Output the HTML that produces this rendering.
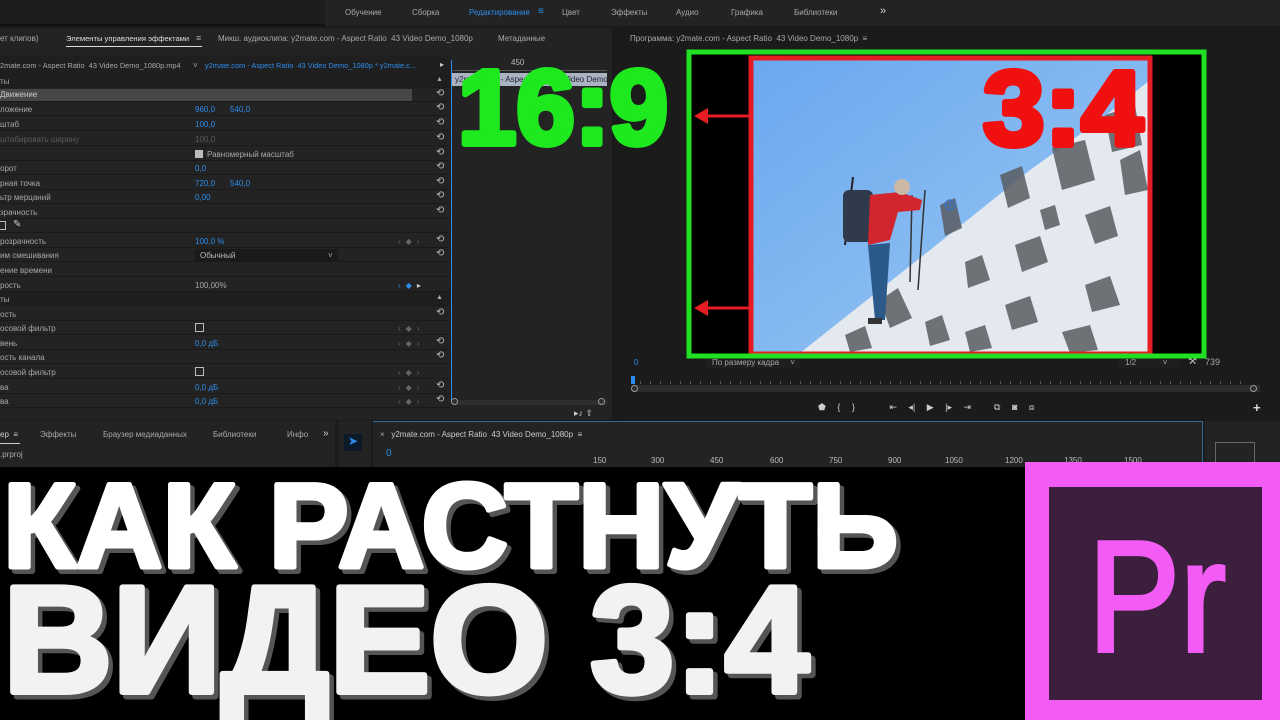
<!DOCTYPE html>
<html><head><meta charset="utf-8">
<style>
*{margin:0;padding:0;box-sizing:border-box}
body{width:1280px;height:720px;overflow:hidden;background:#1b1b1b;font-family:"Liberation Sans","DejaVu Sans",sans-serif;position:relative;color:#a8a8a8;font-size:8px}
.a{position:absolute;white-space:nowrap}
.b{color:#2d8ceb}
.dim{color:#5a5a5a}
.row{position:absolute;left:0;width:450px;height:14px;border-bottom:1px solid #1a1a1a}
.rs{position:absolute;left:436px;font-size:10px;color:#bbb}
.kf{position:absolute;left:398px;color:#666;font-size:8px;letter-spacing:5px}
svg text{font-family:"Liberation Sans",sans-serif;font-weight:700}
</style></head><body>
<div class="a" style="left:0;top:0;width:1280px;height:26px;background:#1d1d1d;border-bottom:2px solid #111"></div>
<div class="a" style="left:325px;top:0;width:955px;height:26px;background:#232323"></div>
<div class="a" style="top:8px;left:345px">Обучение</div>
<div class="a" style="top:8px;left:412px">Сборка</div>
<div class="a b" style="top:8px;left:469px">Редактирование</div>
<div class="a b" style="top:6px;left:538px;font-size:10px">≡</div>
<div class="a" style="top:8px;left:562px">Цвет</div>
<div class="a" style="top:8px;left:611px">Эффекты</div>
<div class="a" style="top:8px;left:676px">Аудио</div>
<div class="a" style="top:8px;left:731px">Графика</div>
<div class="a" style="top:8px;left:794px">Библиотеки</div>
<div class="a" style="top:5px;left:880px;font-size:11px;color:#ccc">»</div>

<div class="a" style="left:0;top:28px;width:612px;height:392px;background:#232323"></div>
<div class="a" style="left:612px;top:28px;width:10px;height:392px;background:#1a1a1a"></div>
<div class="a" style="top:34px;left:0">ет клипов)</div>
<div class="a" style="top:34px;left:66px;color:#ddd;font-size:7.6px">Элементы управления эффектами</div>
<div class="a" style="left:66px;top:46px;width:136px;height:1px;background:#ddd"></div>
<div class="a" style="top:33px;left:196px;font-size:9px">≡</div>
<div class="a" style="top:34px;left:218px">Микш. аудиоклипа: y2mate.com - Aspect Ratio&nbsp; 43 Video Demo_1080p</div>
<div class="a" style="top:34px;left:498px">Метаданные</div>
<div class="a" style="left:0;top:56px;width:450px;height:18px;background:#1f1f1f"></div>
<div class="a" style="top:61px;left:0;font-size:7.4px">2mate.com - Aspect Ratio&nbsp; 43 Video Demo_1080p.mp4</div>
<div class="a" style="top:61px;left:193px">˅</div>
<div class="a b" style="top:61px;left:205px;font-size:7.4px">y2mate.com - Aspect Ratio&nbsp; 43 Video Demo_1080p * y2mate.c...</div>
<div class="a" style="top:60px;left:440px;font-size:8px;color:#ccc">▸</div>

<div class="row" style="top:74px;background:#1e1e1e"><span class="a" style="left:0;top:3px">ты</span><span class="a" style="left:436px;top:2px;font-size:7px">▲</span></div>
<div class="row" style="top:88px"><div class="a" style="left:0;top:1px;width:412px;height:12px;background:#474747"></div><span class="a" style="left:0;top:2px;color:#ccc">Движение</span><span class="rs" style="top:0">⟲</span></div>
<div class="row" style="top:102px"><span class="a" style="top:3px">ложение</span><span class="a b" style="left:195px;top:3px">960,0</span><span class="a b" style="left:230px;top:3px">540,0</span><span class="rs">⟲</span></div>
<div class="row" style="top:117px"><span class="a" style="top:3px">штаб</span><span class="a b" style="left:195px;top:3px">100,0</span><span class="rs">⟲</span></div>
<div class="row" style="top:132px"><span class="a dim" style="top:3px">штабировать ширину</span><span class="a dim" style="left:195px;top:3px">100,0</span><span class="rs">⟲</span></div>
<div class="row" style="top:147px"><span class="a" style="left:195px;top:3px;width:8px;height:8px;background:#bbb"></span><span class="a" style="left:207px;top:3px">Равномерный масштаб</span><span class="rs">⟲</span></div>
<div class="row" style="top:161px"><span class="a" style="top:3px">орот</span><span class="a b" style="left:195px;top:3px">0,0</span><span class="rs">⟲</span></div>
<div class="row" style="top:176px"><span class="a" style="top:3px">рная точка</span><span class="a b" style="left:195px;top:3px">720,0</span><span class="a b" style="left:230px;top:3px">540,0</span><span class="rs">⟲</span></div>
<div class="row" style="top:190px"><span class="a" style="top:3px">ьтр мерцаний</span><span class="a b" style="left:195px;top:3px">0,00</span><span class="rs">⟲</span></div>
<div class="row" style="top:205px"><span class="a" style="top:3px">зрачность</span><span class="rs">⟲</span></div>
<div class="row" style="top:219px"><span class="a" style="left:-3px;top:2px;width:9px;height:9px;border:1px solid #bbb"></span><span class="a" style="left:13px;top:0;font-size:10px;color:#ccc">✎</span></div>
<div class="row" style="top:234px"><span class="a" style="top:3px">розрачность</span><span class="a b" style="left:195px;top:3px">100,0 %</span><span class="kf" style="top:3px">‹◆›</span><span class="rs">⟲</span></div>
<div class="row" style="top:248px"><span class="a" style="top:3px">им смешивания</span><div class="a" style="left:195px;top:1px;width:143px;height:12px;background:#1a1a1a"></div><span class="a" style="left:200px;top:3px;color:#bbb">Обычный</span><span class="a" style="left:328px;top:3px">˅</span><span class="rs">⟲</span></div>
<div class="row" style="top:263px"><span class="a" style="top:3px">ение времени</span></div>
<div class="row" style="top:278px"><span class="a" style="top:3px">рость</span><span class="a" style="left:195px;top:3px">100,00%</span><span class="kf" style="top:3px;color:#2d8ceb">‹◆<b style="color:#ccc">▸</b></span></div>
<div class="row" style="top:292px;background:#1e1e1e"><span class="a" style="top:3px">ты</span><span class="a" style="left:436px;top:2px;font-size:7px">▲</span></div>
<div class="row" style="top:307px"><span class="a" style="top:3px">ость</span><span class="rs">⟲</span></div>
<div class="row" style="top:321px"><span class="a" style="top:3px">осовой фильтр</span><span class="a" style="left:195px;top:2px;width:9px;height:9px;border:1px solid #bbb"></span><span class="kf" style="top:3px">‹◆›</span></div>
<div class="row" style="top:336px"><span class="a" style="top:3px">вень</span><span class="a b" style="left:195px;top:3px">0,0 дБ</span><span class="kf" style="top:3px">‹◆›</span><span class="rs">⟲</span></div>
<div class="row" style="top:350px"><span class="a" style="top:3px">ость канала</span><span class="rs">⟲</span></div>
<div class="row" style="top:365px"><span class="a" style="top:3px">осовой фильтр</span><span class="a" style="left:195px;top:2px;width:9px;height:9px;border:1px solid #bbb"></span><span class="kf" style="top:3px">‹◆›</span></div>
<div class="row" style="top:380px"><span class="a" style="top:3px">ва</span><span class="a b" style="left:195px;top:3px">0,0 дБ</span><span class="kf" style="top:3px">‹◆›</span><span class="rs">⟲</span></div>
<div class="row" style="top:394px"><span class="a" style="top:3px">ва</span><span class="a b" style="left:195px;top:3px">0,0 дБ</span><span class="kf" style="top:3px">‹◆›</span><span class="rs">⟲</span></div>

<div class="a" style="left:451px;top:60px;width:1px;height:342px;background:#2d8ceb"></div>
<div class="a" style="left:511px;top:58px;color:#bbb">450</div>
<div class="a" style="left:452px;top:70px;width:155px;height:1px;background:#555"></div>
<div class="a" style="left:452px;top:73px;width:155px;height:13px;background:#a9b3c2;color:#223;padding:2px 3px;overflow:hidden">y2mate.com - Aspect Ratio 43 Video Demo</div>
<div class="a" style="left:452px;top:400px;width:155px;height:5px;background:#2e2e2e;border-radius:3px"></div>
<div class="a" style="left:451px;top:398px;width:7px;height:7px;border:1px solid #999;border-radius:50%"></div>
<div class="a" style="left:598px;top:398px;width:7px;height:7px;border:1px solid #999;border-radius:50%"></div>
<div class="a" style="left:574px;top:408px;color:#ccc;font-size:9px">▸♪ ⇪</div>

<div class="a" style="top:34px;left:630px">Программа: y2mate.com - Aspect Ratio&nbsp; 43 Video Demo_1080p&nbsp; ≡</div>
<div class="a b" style="top:358px;left:634px">0</div>
<div class="a" style="top:356px;left:705px;width:95px;height:12px;background:#1f1f1f"></div>
<div class="a" style="top:358px;left:712px">По размеру кадра&nbsp;&nbsp;&nbsp;&nbsp; ˅</div>
<div class="a" style="top:356px;left:1118px;width:62px;height:12px;background:#1f1f1f"></div>
<div class="a" style="top:358px;left:1125px">1/2&nbsp;&nbsp;&nbsp;&nbsp;&nbsp;&nbsp;&nbsp;&nbsp;&nbsp;&nbsp;&nbsp; ˅</div>
<div class="a" style="top:356px;left:1188px;font-size:10px;color:#ccc">⚒</div>
<div class="a" style="top:357px;left:1205px;font-size:9px">739</div>
<div class="a" style="top:385px;left:632px;width:628px;height:7px;background:#2c2c2c"></div>
<div class="a" style="top:385px;left:631px;width:7px;height:7px;border:1px solid #999;border-radius:50%"></div>
<div class="a" style="top:385px;left:1250px;width:7px;height:7px;border:1px solid #999;border-radius:50%"></div>
<div class="a" style="top:376px;left:631px;width:4px;height:8px;background:#2d8ceb"></div>
<div class="a" style="top:381px;left:640px;width:610px;height:3px;background:repeating-linear-gradient(90deg,#555 0 1px,transparent 1px 10px)"></div>
<div class="a" style="top:402px;left:818px;color:#ccc;font-size:9px;word-spacing:9px">⬟ { }&nbsp;&nbsp; ⇤ ◂| ▶ |▸ ⇥&nbsp; ⧉ ◙ ⧈</div>
<div class="a" style="top:400px;left:1253px;color:#ddd;font-size:13px;font-weight:bold">+</div>

<div class="a" style="left:0;top:421px;width:335px;height:46px;background:#232323"></div>
<div class="a" style="top:430px;left:0;color:#ccc">ер&nbsp; ≡</div>
<div class="a" style="top:443px;left:0;width:20px;height:1px;background:#ccc"></div>
<div class="a" style="top:430px;left:40px">Эффекты</div>
<div class="a" style="top:430px;left:103px">Браузер медиаданных</div>
<div class="a" style="top:430px;left:213px">Библиотеки</div>
<div class="a" style="top:430px;left:287px">Инфо</div>
<div class="a" style="top:428px;left:323px;color:#ccc;font-size:10px">»</div>
<div class="a" style="top:450px;left:0">.prproj</div>
<div class="a" style="left:338px;top:421px;width:33px;height:46px;background:#232323"></div>
<div class="a" style="left:344px;top:434px;width:18px;height:17px;background:#0d1a2a;color:#2d8ceb;font-size:12px;text-align:center">➤</div>
<div class="a" style="left:373px;top:421px;width:830px;height:46px;background:#232323;border-top:1px solid #2d6a9a;border-right:1px solid #2d6a9a"></div>
<div class="a" style="top:430px;left:380px">×&nbsp;&nbsp; <span style="color:#ccc">y2mate.com - Aspect Ratio&nbsp; 43 Video Demo_1080p&nbsp; ≡</span></div>
<div class="a b" style="top:448px;left:386px;font-size:10px">0</div>
<div class="a" style="top:456px;left:593px;color:#bbb">150</div><div class="a" style="top:456px;left:651px;color:#bbb">300</div><div class="a" style="top:456px;left:710px;color:#bbb">450</div><div class="a" style="top:456px;left:770px;color:#bbb">600</div><div class="a" style="top:456px;left:829px;color:#bbb">750</div><div class="a" style="top:456px;left:888px;color:#bbb">900</div><div class="a" style="top:456px;left:945px;color:#bbb">1050</div><div class="a" style="top:456px;left:1005px;color:#bbb">1200</div><div class="a" style="top:456px;left:1064px;color:#bbb">1350</div><div class="a" style="top:456px;left:1124px;color:#bbb">1500</div>
<div class="a" style="left:1205px;top:421px;width:75px;height:46px;background:#232323"></div>
<div class="a" style="left:1215px;top:442px;width:40px;height:26px;border:1px solid #666"></div>

<svg class="a" style="left:0;top:0" width="1280" height="720" viewBox="0 0 1280 720">
 <rect x="690" y="52" width="516" height="304" fill="#000"/>
 <defs><linearGradient id="sky" x1="0" y1="0" x2="1" y2="1"><stop offset="0" stop-color="#6aa8ef"/><stop offset="1" stop-color="#9cc8f3"/></linearGradient></defs>
 <rect x="751" y="58" width="399" height="295" fill="url(#sky)"/>
 <polygon points="800,353 930,250 1030,170 1100,120 1150,80 1150,353" fill="#e4e9ef"/>
 <g fill="#5a5d62" opacity="0.85">
  <polygon points="880,300 898,288 912,318 890,328"/><polygon points="940,205 955,198 962,228 945,236"/>
  <polygon points="1000,175 1022,166 1030,198 1008,208"/><polygon points="1052,148 1085,140 1095,180 1062,190"/>
  <polygon points="965,262 982,255 990,280 968,288"/><polygon points="1015,245 1040,236 1048,262 1022,272"/>
  <polygon points="1085,215 1110,206 1118,236 1095,244"/><polygon points="845,335 865,326 872,348 850,352"/>
  <polygon points="925,322 942,315 950,340 930,346"/><polygon points="1005,305 1030,296 1038,322 1012,330"/>
  <polygon points="1085,285 1110,276 1120,305 1092,312"/><polygon points="1105,115 1135,105 1142,145 1112,152"/>
  <polygon points="965,332 985,325 992,348 970,352"/><polygon points="1062,332 1090,325 1098,350 1070,353"/>
  <polygon points="1120,160 1140,150 1148,190 1125,195"/><polygon points="1040,210 1055,205 1060,225 1045,230"/>
 </g>
 <g>
  <line x1="853" y1="177" x2="845" y2="245" stroke="#222" stroke-width="2"/>
  <line x1="925" y1="190" x2="918" y2="290" stroke="#333" stroke-width="1.5"/>
  <line x1="912" y1="195" x2="910" y2="282" stroke="#333" stroke-width="1.5"/>
  <rect x="843" y="190" width="30" height="52" rx="6" fill="#2f3a4c"/>
  <path d="M870 195 L900 192 L922 200 L920 210 L898 212 L890 240 L868 245 Z" fill="#d3252e"/>
  <circle cx="902" cy="187" r="8" fill="#cbb9a8"/>
  <path d="M868 245 L890 243 L885 320 L875 320 Z" fill="#2b5a8a"/>
  <rect x="868" y="318" width="14" height="6" fill="#333"/>
 </g>
 <g fill="none" stroke="#3575c8" stroke-width="1"><circle cx="950" cy="205" r="5"/><line x1="944" y1="205" x2="956" y2="205"/><line x1="950" y1="199" x2="950" y2="211"/></g>
 <rect x="751" y="58" width="399" height="296" fill="none" stroke="#e61c24" stroke-width="5"/>
 <rect x="689" y="52" width="515" height="304" fill="none" stroke="#21df21" stroke-width="5"/>
 <g stroke="#e61c24" stroke-width="3" fill="#e61c24">
  <line x1="752" y1="116" x2="703" y2="116"/><polygon points="694,116 708,108 708,124" stroke="none"/>
  <line x1="752" y1="308" x2="703" y2="308"/><polygon points="694,308 708,300 708,316" stroke="none"/>
 </g>
 <text x="458" y="144" textLength="210" lengthAdjust="spacingAndGlyphs" font-size="106" fill="#1ee81e" stroke="#1ee81e" stroke-width="6" stroke-linejoin="round">16:9</text>
 <text x="983" y="145" textLength="160" lengthAdjust="spacingAndGlyphs" font-size="106" fill="#f01010" stroke="#f01010" stroke-width="6" stroke-linejoin="round">3:4</text>

 <rect x="0" y="467" width="1025" height="253" fill="#000"/>
 <g stroke-linejoin="round">
  <text x="7" y="571" textLength="895" lengthAdjust="spacingAndGlyphs" font-size="120" fill="#555" stroke="#555" stroke-width="6">КАК РАСТНУТЬ</text>
  <text x="3" y="567" textLength="895" lengthAdjust="spacingAndGlyphs" font-size="120" fill="#fff" stroke="#fff" stroke-width="5">КАК РАСТНУТЬ</text>
  <text x="7" y="696" textLength="806" lengthAdjust="spacingAndGlyphs" font-size="152" fill="#555" stroke="#555" stroke-width="7">ВИДЕО 3:4</text>
  <text x="3" y="692" textLength="806" lengthAdjust="spacingAndGlyphs" font-size="152" fill="#f2f2f2" stroke="#f2f2f2" stroke-width="6">ВИДЕО 3:4</text>
 </g>
 <rect x="1025" y="462" width="255" height="258" fill="#f25cf5"/>
 <rect x="1049" y="487" width="213" height="213" fill="#3b1f3d"/>
 <text x="1088" y="651" font-size="158" fill="#f25cf5" style="font-weight:400" stroke="#f25cf5" stroke-width="4" textLength="138" lengthAdjust="spacingAndGlyphs">Pr</text>
</svg>
</body></html>
